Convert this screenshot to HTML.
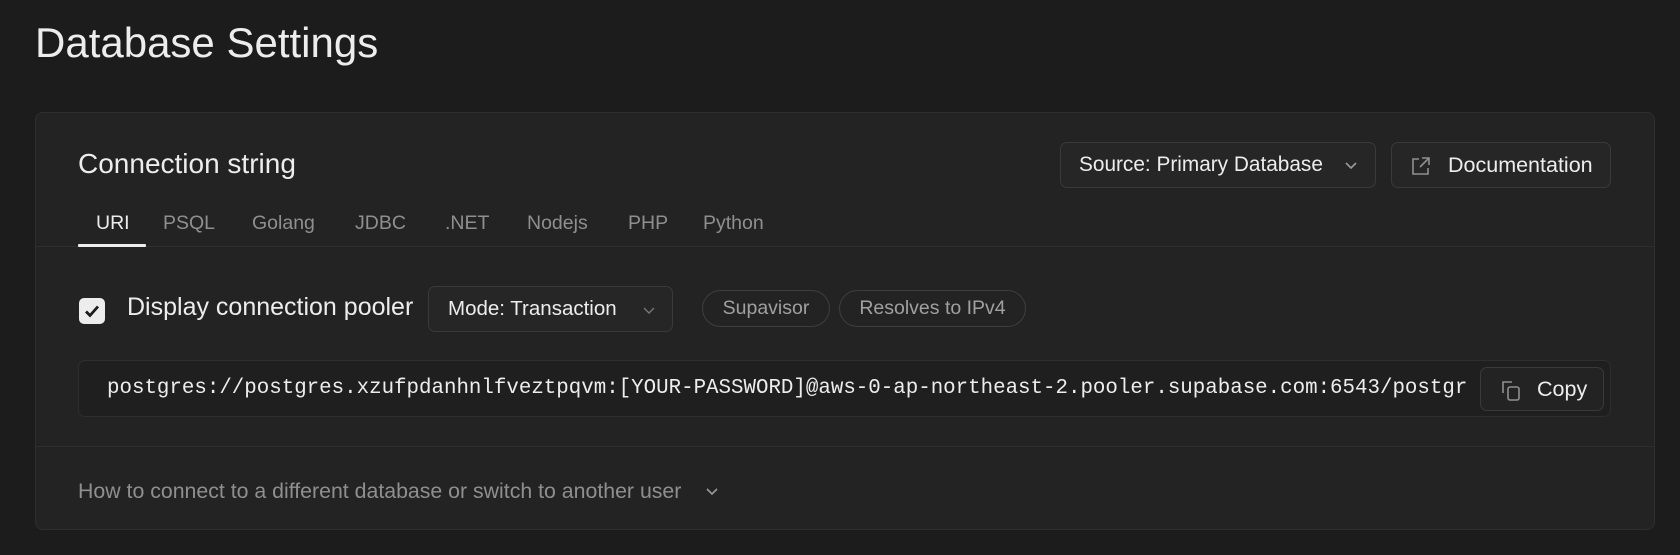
<!DOCTYPE html>
<html><head><meta charset="utf-8"><style>
*{box-sizing:border-box;margin:0;padding:0}
body{width:1680px;height:555px;background:#1c1c1c;font-family:"Liberation Sans",sans-serif;color:#ededed;position:relative;overflow:hidden}
.abs{position:absolute}
.title{left:35px;top:18px;font-size:42px;line-height:50px}
.card{left:35px;top:112px;width:1620px;height:418px;background:#232323;border:1px solid #2f2f2f;border-radius:8px}
.btn{border:1px solid #3a3a3a;border-radius:7px;background:#262626;display:flex;align-items:center;font-size:20.8px;color:#ededed}
.tab{top:212px;font-size:19.5px;color:#8f8f8f}
.pill{border:1px solid #3e3e3e;border-radius:20px;font-size:19.5px;color:#a0a0a0;display:flex;align-items:center;justify-content:center;top:290px;height:37px}
</style></head><body>
<div class="abs title">Database Settings</div>
<div class="abs card"></div>
<div class="abs" style="left:78px;top:148px;font-size:28px;">Connection string</div>

<div class="abs btn" style="left:1060px;top:142px;width:316px;height:46px;padding-left:18px">Source: Primary Database
<svg class="abs" style="left:283px;top:18px" width="14" height="10" viewBox="0 0 14 10"><path d="M2 2l5 5 5-5" fill="none" stroke="#9a9a9a" stroke-width="1.6"/></svg></div>
<div class="abs btn" style="left:1391px;top:142px;width:220px;height:46px;padding-left:56px;font-size:21.5px">Documentation
<svg class="abs" style="left:18px;top:12px" width="22" height="22" viewBox="0 0 22 22"><path d="M9 4H3v15h15v-6M12 3h7v7M19 3l-9 9" fill="none" stroke="#8f8f8f" stroke-width="1.6"/></svg></div>

<div class="abs tab" style="left:96px;color:#ededed">URI</div>
<div class="abs tab" style="left:163px">PSQL</div>
<div class="abs tab" style="left:252px">Golang</div>
<div class="abs tab" style="left:355px">JDBC</div>
<div class="abs tab" style="left:445px">.NET</div>
<div class="abs tab" style="left:527px">Nodejs</div>
<div class="abs tab" style="left:628px">PHP</div>
<div class="abs tab" style="left:703px">Python</div>
<div class="abs" style="left:36px;top:246px;width:1618px;height:1px;background:#2e2e2e"></div>
<div class="abs" style="left:78px;top:244px;width:68px;height:3px;background:#ededed;border-radius:1px"></div>

<div class="abs" style="left:79px;top:298px;width:26px;height:26px;background:#ededed;border-radius:5px">
<svg width="26" height="26" viewBox="0 0 26 26"><path d="M7 13.5l4 4 8-9" fill="none" stroke="#1c1c1c" stroke-width="2.8"/></svg></div>
<div class="abs" style="left:127px;top:293px;font-size:25px">Display connection pooler</div>
<div class="abs btn" style="left:428px;top:286px;width:245px;height:46px;padding-left:19px;font-size:20.5px">Mode: Transaction
<svg class="abs" style="left:213px;top:19px" width="14" height="10" viewBox="0 0 14 10"><path d="M2 2l5 5 5-5" fill="none" stroke="#777" stroke-width="1.4"/></svg></div>
<div class="abs pill" style="left:702px;width:128px">Supavisor</div>
<div class="abs pill" style="left:839px;width:187px">Resolves to IPv4</div>

<div class="abs" style="left:78px;top:360px;width:1533px;height:57px;background:#1f1f1f;border:1px solid #2e2e2e;border-radius:7px;overflow:hidden">
<div class="abs" style="left:28px;top:16px;width:1374px;overflow:hidden;white-space:nowrap;font-family:'Liberation Mono',monospace;font-size:20.8px;color:#ededed">postgres://postgres.xzufpdanhnlfveztpqvm:[YOUR-PASSWORD]@aws-0-ap-northeast-2.pooler.supabase.com:6543/postgr</div>
</div>
<div class="abs btn" style="left:1480px;top:367px;width:124px;height:44px;padding-left:56px;background:#232323;font-size:21.5px">Copy
<svg class="abs" style="left:18px;top:11px" width="24" height="24" viewBox="0 0 24 24"><path d="M4 14V3h9" fill="none" stroke="#8f8f8f" stroke-width="1.6"/><rect x="9" y="8" width="11" height="13" rx="2" fill="none" stroke="#8f8f8f" stroke-width="1.6"/></svg></div>

<div class="abs" style="left:36px;top:446px;width:1618px;height:1px;background:#2e2e2e"></div>
<div class="abs" style="left:78px;top:479px;font-size:21.3px;color:#8f8f8f">How to connect to a different database or switch to another user</div>
<svg class="abs" style="left:705px;top:487px" width="14" height="10" viewBox="0 0 14 10"><path d="M2 2l5 5 5-5" fill="none" stroke="#9a9a9a" stroke-width="1.6"/></svg>
</body></html>
